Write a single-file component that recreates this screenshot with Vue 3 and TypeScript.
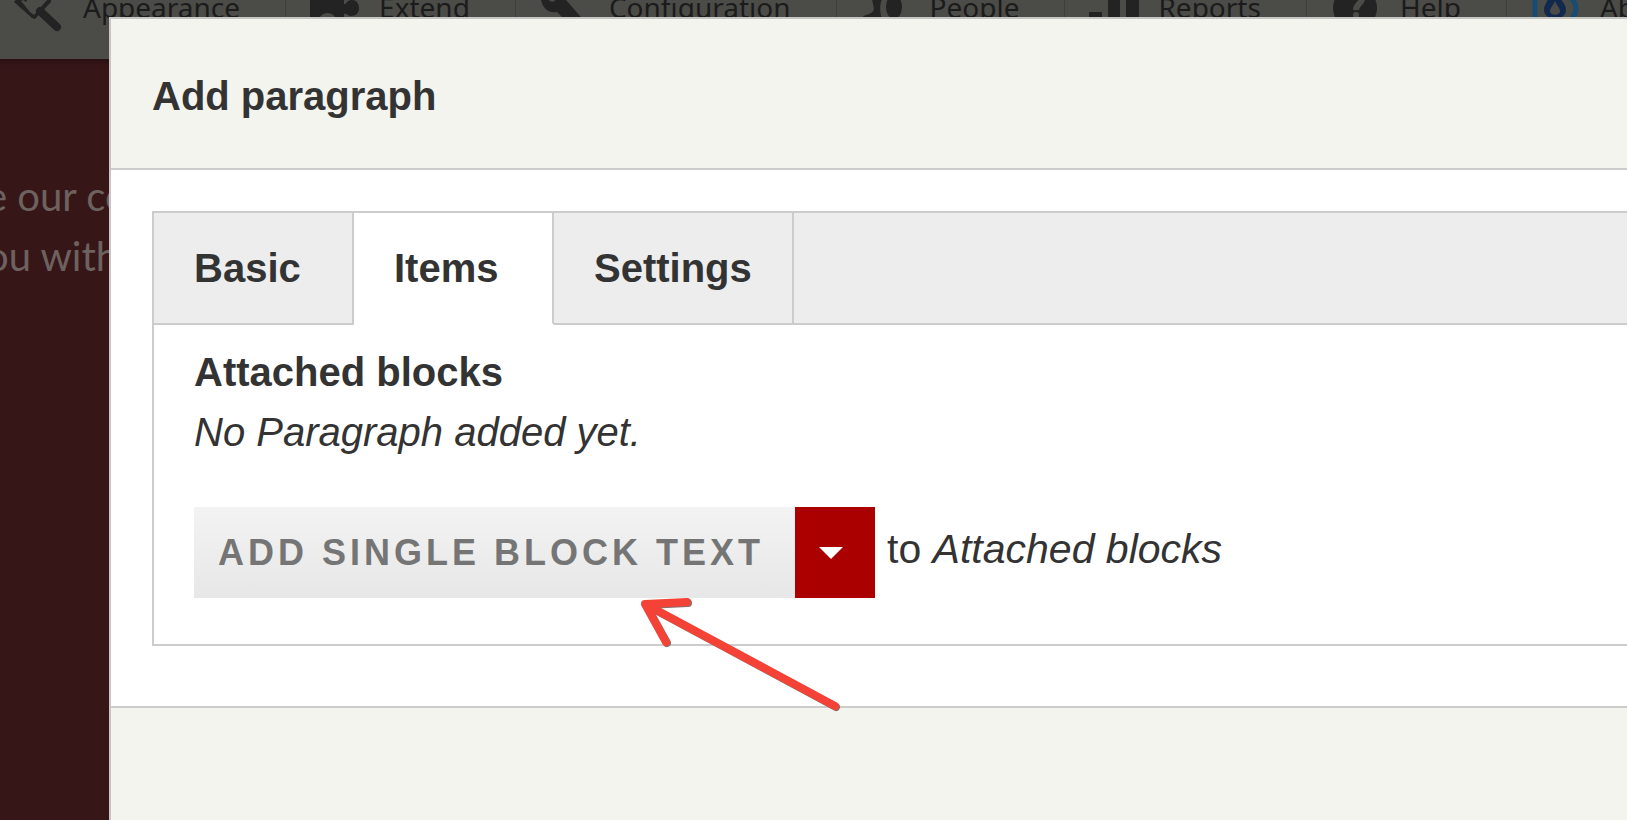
<script setup lang="ts">
import { ref } from 'vue'

type TabName = 'Basic' | 'Items' | 'Settings'

const tabs: TabName[] = ['Basic', 'Items', 'Settings']
const activeTab = ref<TabName>('Items')
const adminLinks: string[] = ['Appearance', 'Extend', 'Configuration', 'People', 'Reports', 'Help', 'Ab']
</script>

<template>
  <div class="page">
    <nav class="toolbar" aria-label="Administration">
      <a v-for="link in adminLinks" :key="link" class="toolbar-link" href="#">
        <svg class="toolbar-icon" viewBox="0 0 52 36" aria-hidden="true">
          <g v-if="link === 'Appearance'">
            <path class="glyph" d="M0 2L5-4H37V2L21 19L18 18Z" />
            <path class="cut" d="M7 1L9 0L12 2L15-4H30L33 0L20 15L16 12Z" />
            <path class="glyph-line" d="M26 11L43 27" />
          </g>
          <g v-else-if="link === 'Extend'">
            <path class="glyph" d="M-1 0H34V4C37 5 36 0 42 0C47 0 49 4 49 8C49 13 46 16 41 16C37 16 37 13 34 14V22H27C25 10 10 10 8 22H-1Z" />
          </g>
          <g v-else-if="link === 'Configuration'">
            <path class="glyph" d="M1-1C2 7 8 14 17 12L29 24H47L26 0V-4H1Z" />
            <path class="cut" d="M8-1H16C14 3 10 2 8-1Z" />
          </g>
          <g v-else-if="link === 'People'">
            <path class="glyph" d="M11-1H21C18 6 19 15 22 22H0C0 12 11 17 13 9Z" />
            <ellipse class="glyph" cx="33" cy="7" rx="8" ry="12" />
          </g>
          <g v-else-if="link === 'Reports'">
            <path class="glyph" d="M0 13Q0 12 1 12H12Q13 12 13 13V24H0ZM19-1H31V24H19ZM37-1H50V24H37Z" />
          </g>
          <g v-else-if="link === 'Help'">
            <circle class="glyph" cx="24" cy="8" r="22" />
            <path class="question" d="M18 0C18-7 31-7 31-1C31 3 25 4 25 10" />
            <circle class="cut" cx="25" cy="15" r="3" />
          </g>
          <g v-else>
            <path class="ring" d="M4-2V24M38-4Q52 8 38 22" />
            <path class="drop" d="M18-4H28C32 3 35 5 35 10C35 15 30 19 24 19C18 19 13 15 13 10C13 5 16 3 18-4Z" />
            <path class="cut" d="M24 1C26 6 29 8 29 11C29 16 19 16 19 11C19 8 22 6 24 1Z" />
          </g>
        </svg>
        <span>{{ link }}</span>
      </a>
    </nav>
    <p class="hero">e our co<br />ou with</p>

    <section class="dialog" role="dialog" aria-labelledby="dialog-title">
      <header class="dialog-header">
        <h1 id="dialog-title">Add paragraph</h1>
      </header>
      <div class="dialog-body">
        <div class="group">
          <div class="tabs" role="tablist">
            <button
              v-for="tab in tabs"
              :key="tab"
              type="button"
              role="tab"
              class="tab"
              :class="{ active: tab === activeTab }"
              :aria-selected="tab === activeTab"
              @click="activeTab = tab"
            >{{ tab }}</button>
            <div class="tabs-rest"></div>
          </div>
          <div class="panel" role="tabpanel">
            <h2>Attached blocks</h2>
            <p class="empty"><em>No Paragraph added yet.</em></p>
            <div class="actions">
              <button type="button" class="add">ADD SINGLE BLOCK TEXT</button>
              <button type="button" class="toggle" aria-label="List additional actions">
                <svg width="24" height="12" viewBox="0 0 24 12" aria-hidden="true"><path d="M0 0H24L12 12Z" fill="#fff" /></svg>
              </button>
              <span class="target">to <em>Attached blocks</em></span>
            </div>
          </div>
        </div>
      </div>
      <footer class="dialog-footer"></footer>
      <svg class="arrow" width="208" height="120" viewBox="0 0 208 120" aria-hidden="true">
        <path class="arrow-shadow" d="M52 6L10 8L31 46M12 9L200 110" />
        <path class="arrow-line" d="M51 5L9 7L30 45M11 8L199 109" />
      </svg>
    </section>
  </div>
</template>

<style>
body {
  margin: 0;
}
</style>

<style scoped>
.page {
  position: relative;
  min-height: 100vh;
  overflow: hidden;
  background: #371618;
  color: #333;
  font: 40px/60px "Liberation Sans", Arial, sans-serif;
}

h1,
h2,
p {
  margin: 0;
  font-size: 40px;
}

button {
  margin: 0;
  border: 0;
  border-radius: 0;
  color: inherit;
  font: inherit;
  font-weight: 700;
  cursor: pointer;
}

.toolbar {
  display: flex;
  height: 59px;
  margin-left: -10px;
  overflow: hidden;
  background: #4b4b48;
  box-shadow: 0 0 8px #1b0b0c;
}

.toolbar-link {
  display: flex;
  flex: none;
  align-items: flex-start;
  gap: 17px;
  padding: 0 45px 0 24px;
  border-right: 1px solid #3e3e3c;
  color: #1b1b1b;
  font: 28px/14px "Noto Sans", "Open Sans", sans-serif;
  text-decoration: none;
}

.toolbar-icon {
  width: 52px;
  height: 36px;
}

.glyph {
  fill: #232323;
}

.glyph-line {
  fill: none;
  stroke: #232323;
  stroke-width: 8;
  stroke-linecap: round;
}

.cut {
  fill: #4b4b48;
}

.question {
  fill: none;
  stroke: #4b4b48;
  stroke-width: 6;
}

.ring {
  fill: none;
  stroke: #174d75;
  stroke-width: 5;
}

.drop {
  fill: #10294d;
}

.hero {
  margin: 107px 0 0 -14px;
  color: #6d6260;
  font: 40px/60px Lato, sans-serif;
}

.dialog {
  position: absolute;
  inset: 17px 0 0 109px;
  display: flex;
  flex-direction: column;
  border-top: 2px solid #c5c5c2;
  border-left: 2px solid #ccc5c5;
  background: #fff;
}

.dialog-header {
  padding: 47px 41px 42px;
  border-bottom: 2px solid #ccc;
  background: #f3f4ee;
}

.dialog-body {
  padding: 41px 0 60px 41px;
}

.group {
  border: 2px solid #ccc;
  border-right: 0;
}

.tabs {
  display: flex;
}

.tab {
  box-sizing: border-box;
  min-width: 200px;
  height: 112px;
  padding: 0 40px;
  border-right: 2px solid #ccc;
  border-bottom: 2px solid #ccc;
  background: #ededed;
  text-align: left;
}

.tab.active {
  border-bottom-color: #fff;
  background: #fff;
}

.tabs-rest {
  flex: 1;
  border-bottom: 2px solid #ccc;
  background: #ededed;
}

.panel {
  padding: 17px 40px 46px;
}

.actions {
  display: flex;
  align-items: flex-start;
  margin-top: 45px;
}

.add {
  height: 91px;
  padding: 0 31px 0 24px;
  background: linear-gradient(#f3f3f3, #e7e7e7);
  color: #757575;
  font-size: 36px;
  letter-spacing: 4px;
  white-space: nowrap;
}

.toggle {
  display: flex;
  align-items: center;
  justify-content: center;
  width: 80px;
  height: 91px;
  padding: 0 8px 0 0;
  background: #a00;
}

.target {
  margin-left: 12px;
  font-size: 41px;
  line-height: 84px;
  white-space: nowrap;
}

.dialog-footer {
  flex: 1;
  border-top: 2px solid #ccc;
  background: #f3f4ee;
}

.arrow {
  position: absolute;
  top: 578px;
  left: 525px;
  pointer-events: none;
}

.arrow-line,
.arrow-shadow {
  fill: none;
  stroke: #f44336;
  stroke-width: 8;
  stroke-linecap: round;
  stroke-linejoin: round;
}

.arrow-shadow {
  stroke: #8a6f69;
}
</style>
